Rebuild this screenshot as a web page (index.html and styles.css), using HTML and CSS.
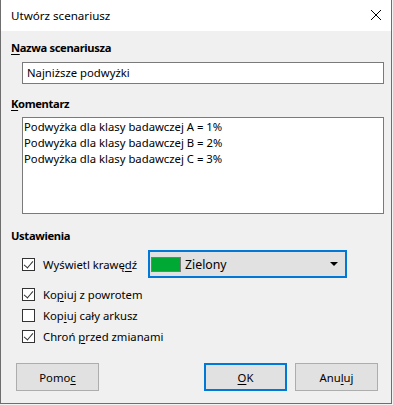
FILE: index.html
```html
<!DOCTYPE html>
<html lang="pl">
<head>
    <meta charset="UTF-8">
    <title>Utwórz scenariusz</title>
    <link rel="stylesheet" href="styles.css">
</head>
<body>
    <div class="dialog">
        <div class="titlebar">
            <span class="title">Utwórz scenariusz</span>
            <svg class="close" width="12" height="12" viewBox="0 0 12 12">
                <path d="M1 1 L11 11 M11 1 L1 11" stroke="#000" stroke-width="1" fill="none"/>
            </svg>
        </div>

        <div class="content">
            <div class="section-label"><u>N</u>azwa scenariusza</div>
            <div class="field">Najniższe podwyżki</div>

            <div class="section-label"><u>K</u>omentarz</div>
            <div class="memo">
                <div>Podwyżka dla klasy badawczej A = 1%</div>
                <div>Podwyżka dla klasy badawczej B = 2%</div>
                <div>Podwyżka dla klasy badawczej C = 3%</div>
            </div>

            <div class="section-label">Ustawienia</div>
            <div class="options">
                <div class="option first">
                    <span class="check checked"></span>
                    <span class="option-text">Wyświetl krawę<u>d</u>ź</span>
                    <div class="dropdown">
                        <span class="swatch"></span>
                        <span class="dropdown-text">Zielony</span>
                        <span class="arrow"></span>
                    </div>
                </div>
                <div class="option">
                    <span class="check checked"></span>
                    <span class="option-text">Ko<u>p</u>iuj z powrotem</span>
                </div>
                <div class="option">
                    <span class="check"></span>
                    <span class="option-text">Kop<u>i</u>uj cały arkusz</span>
                </div>
                <div class="option">
                    <span class="check checked"></span>
                    <span class="option-text">Chroń <u>p</u>rzed zmianami</span>
                </div>
            </div>

            <div class="buttons">
                <button class="btn">Pomo<u>c</u></button>
                <span class="spacer"></span>
                <button class="btn default"><u>O</u>K</button>
                <button class="btn">Anu<u>l</u>uj</button>
            </div>
        </div>
    </div>
</body>
</html>
```

FILE: styles.css
```css
html, body {
    margin: 0;
    padding: 0;
    background-color: #f3f3f3;
}

body {
    font-family: "Noto Sans", "Open Sans", sans-serif;
    font-size: 11.3px;
    color: #000;
}

u {
    text-decoration: underline;
    text-underline-offset: 2px;
}

/******/
/* WINDOW */
/*******/

.dialog {
    width: 390px;
    height: 403px;
    border: 1px solid #6e6e6e;
    border-top: none;
    background-color: #f0f0f0;
    display: flex;
    flex-direction: column;
}

.titlebar {
    height: 31px;
    background-color: #ffffff;
    display: flex;
    align-items: center;
    padding: 0 9px 0 10px;
}

.title {
    flex: 1;
    font-size: 11.6px;
}

.close {
    display: block;
    margin-top: -1px;
}

.content {
    flex: 1;
    padding: 9px 7px 0 10px;
    display: flex;
    flex-direction: column;
}

.section-label {
    font-weight: bold;
    font-size: 11.2px;
    letter-spacing: -0.35px;
    line-height: 16px;
    height: 16px;
}

/* text inputs */
.field {
    margin: 6px 0 12px 11px;
    height: 20px;
    border: 1px solid #7a7a7a;
    background: #fff;
    line-height: 20px;
    padding: 0 4px;
}

.memo {
    margin: 5px 0 14px 11px;
    height: 93px;
    border: 1px solid #7a7a7a;
    background: #fff;
    padding: 1px 1px;
    line-height: 16px;
}

/******/
/* OPTIONS */
/*******/

.options {
    display: flex;
    flex-direction: column;
    margin-left: 11px;
    margin-top: 6px;
}

.option {
    display: flex;
    align-items: center;
    height: 21px;
}

.option.first {
    height: 28px;
    margin-bottom: 6px;
}

.check {
    width: 11px;
    height: 11px;
    border: 1px solid #333;
    background: #fff;
    position: relative;
    flex: none;
}

.check.checked::after {
    content: "";
    position: absolute;
    left: 3px;
    top: 0px;
    width: 4px;
    height: 8px;
    border: solid #333;
    border-width: 0 1px 1px 0;
    transform: rotate(40deg);
}

.option-text {
    margin-left: 8px;
}

.first .option-text {
    width: 105px;
}

.dropdown {
    width: 195px;
    height: 24px;
    border: 2px solid #0078d7;
    background: #e1e1e1;
    display: flex;
    align-items: center;
}

.swatch {
    width: 28px;
    height: 13px;
    border: 1px solid #7a7a7a;
    background: #00a933;
    margin-left: 1px;
}

.dropdown-text {
    flex: 1;
    margin-left: 4px;
    font-size: 12.3px;
}

.arrow {
    width: 0;
    height: 0;
    border-left: 4px solid transparent;
    border-right: 4px solid transparent;
    border-top: 4px solid #000;
    margin-right: 7px;
}

/******/
/* BUTTONS */
/*******/

.buttons {
    display: flex;
    margin: 16px 6px 0 5px;
    gap: 8px;
}

.spacer {
    flex: 1;
}

.btn {
    width: 83px;
    height: 28px;
    border: 1px solid #adadad;
    background: #e1e1e1;
    font-family: inherit;
    font-size: 11.3px;
    color: #000;
    padding: 0;
}

.btn.default {
    border: 2px solid #0078d7;
}
```
